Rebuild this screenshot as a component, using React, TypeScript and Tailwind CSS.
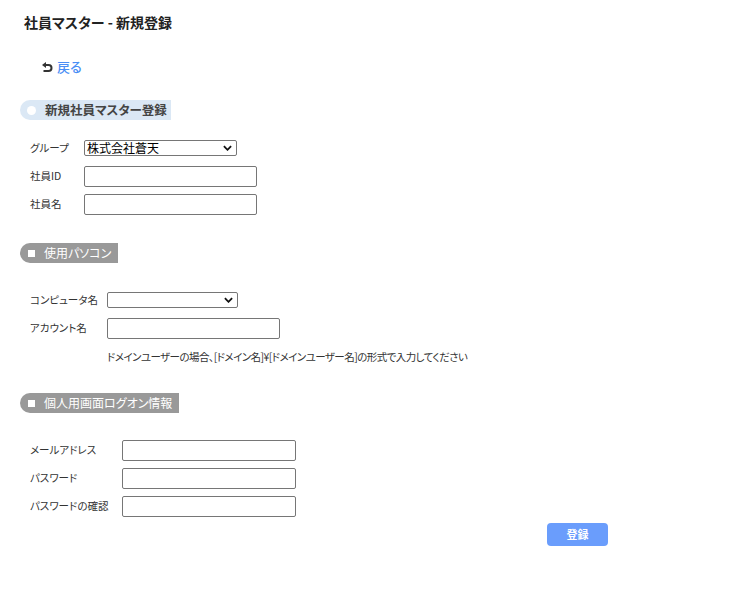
const FONT = '"Noto Sans CJK JP", "Noto Sans", sans-serif';

function BackIcon() {
  return (
    <svg viewBox="0 0 11 10" className="h-[10px] w-[11px]" aria-hidden="true">
      <polygon points="0,3 4,0 4,6" fill="#333" />
      <path d="M3.5 3 H6.5 a3 3 0 0 1 0 6 H1.5" fill="none" stroke="#333" strokeWidth="2" />
    </svg>
  );
}

function Chevron() {
  return (
    <svg viewBox="0 0 10 6" className="h-[6px] w-[9px]" aria-hidden="true">
      <path d="M1 1 L5 5 L9 1" fill="none" stroke="#111" strokeWidth="2" />
    </svg>
  );
}

function SelectBox({ width, value }: { width: string; value: string }) {
  return (
    <div className={`relative h-[16px] ${width}`}>
      <select className="h-full w-full appearance-none rounded-[2px] border border-[#767676] bg-white py-0 pl-[2px] pr-[16px] text-[12px] leading-[14px] text-black">
        <option>{value}</option>
      </select>
      <span className="pointer-events-none absolute right-[5px] top-[5px] flex">
        <Chevron />
      </span>
    </div>
  );
}

function SectionHeader({ label, variant }: { label: string; variant: "blue" | "gray" }) {
  if (variant === "blue") {
    return (
      <div className="ml-[20px] flex h-[20px] w-fit items-center rounded-l-full bg-[#dbe8f5] pl-[7px] pr-[4px]">
        <span className="block h-[9px] w-[9px] rounded-full bg-white" />
        <span className="ml-[9px] text-[12.5px] font-bold text-[#444]">{label}</span>
      </div>
    );
  }
  return (
    <div className="ml-[20px] flex h-[20px] w-fit items-center rounded-l-full bg-[#999999] pl-[8px] pr-[7px]">
      <span className="block h-[7px] w-[7px] bg-white" />
      <span className="ml-[9px] text-[12px] text-white">{label}</span>
    </div>
  );
}

function TextInput({ width }: { width: string }) {
  return (
    <input
      type="text"
      className={`h-[21px] rounded-[2px] border border-[#767676] bg-white px-1 text-[12px] outline-none ${width}`}
    />
  );
}

export default function App() {
  return (
    <div
      className="min-h-[608px] w-[735px] bg-white text-[#333] [font-feature-settings:'palt']"
      style={{ fontFamily: FONT }}
    >
      <h1 className="pl-[24px] pt-[12px] text-[14px] font-bold leading-[20px] text-[#222]">
        社員マスター - 新規登録
      </h1>

      <div className="mt-[26px] ml-[42px] flex items-center gap-[4px]">
        <BackIcon />
        <a href="#" className="text-[13px] font-medium leading-[18px] text-[#4a8ef5]">
          戻る
        </a>
      </div>

      <div className="mt-[24px]">
        <SectionHeader label="新規社員マスター登録" variant="blue" />
      </div>

      <div className="mt-[14px] ml-[30px] grid grid-cols-[54px_auto] text-[10.5px]">
        <div className="flex h-[28px] items-center">グループ</div>
        <div className="flex h-[28px] items-center">
          <SelectBox width="w-[153px]" value="株式会社蒼天" />
        </div>
        <div className="flex h-[28px] items-center">社員ID</div>
        <div className="flex h-[28px] items-center">
          <TextInput width="w-[173px]" />
        </div>
        <div className="flex h-[28px] items-center">社員名</div>
        <div className="flex h-[28px] items-center">
          <TextInput width="w-[173px]" />
        </div>
      </div>

      <div className="mt-[25px]">
        <SectionHeader label="使用パソコン" variant="gray" />
      </div>

      <div className="mt-[23px] ml-[30px] grid grid-cols-[77px_auto] text-[10.5px]">
        <div className="flex h-[28px] items-center whitespace-nowrap">コンピュータ名</div>
        <div className="flex h-[28px] items-center">
          <SelectBox width="w-[131px]" value="" />
        </div>
        <div className="flex h-[28px] items-center">アカウント名</div>
        <div className="flex h-[28px] items-center">
          <TextInput width="w-[173px]" />
        </div>
        <div />
        <div className="mt-[7px] whitespace-nowrap text-[10.5px] leading-[16px] tracking-[-0.55px]">
          ドメインユーザーの場合、[ドメイン名]¥[ドメインユーザー名]の形式で入力してください
        </div>
      </div>

      <div className="mt-[28px]">
        <SectionHeader label="個人用画面ログオン情報" variant="gray" />
      </div>

      <div className="mt-[23px] ml-[30px] grid grid-cols-[92px_auto] text-[10.5px]">
        <div className="flex h-[28px] items-center whitespace-nowrap">メールアドレス</div>
        <div className="flex h-[28px] items-center">
          <TextInput width="w-[174px]" />
        </div>
        <div className="flex h-[28px] items-center">パスワード</div>
        <div className="flex h-[28px] items-center">
          <TextInput width="w-[174px]" />
        </div>
        <div className="flex h-[28px] items-center whitespace-nowrap">パスワードの確認</div>
        <div className="flex h-[28px] items-center">
          <TextInput width="w-[174px]" />
        </div>
      </div>

      <div className="mt-[3px] flex w-[608px] justify-end">
        <button className="h-[23px] w-[61px] rounded-[4px] bg-[#6a9dfc] text-[11px] font-bold text-white">
          登録
        </button>
      </div>
    </div>
  );
}
